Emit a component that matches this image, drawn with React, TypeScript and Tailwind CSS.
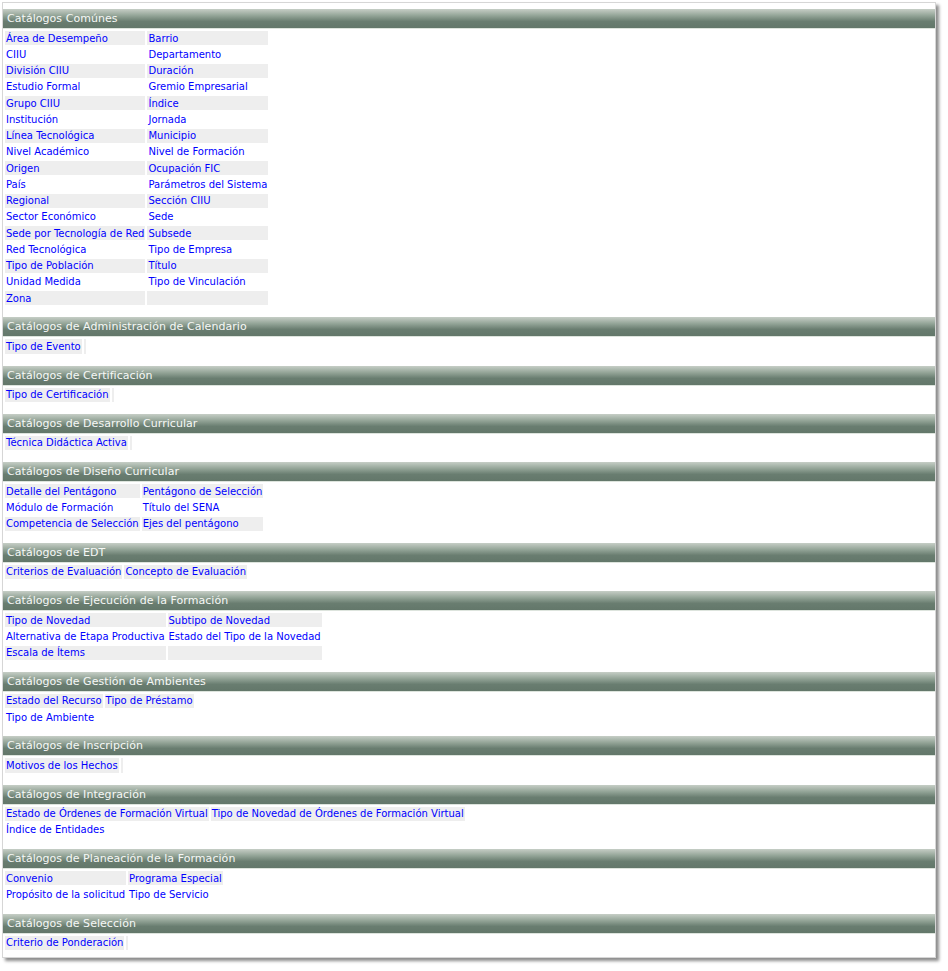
type Section = {
  title: string;
  rows: string[][];
};

const SECTIONS: Section[] = [
  {
    title: "Catálogos Comúnes",
    rows: [
      ["Área de Desempeño", "Barrio"],
      ["CIIU", "Departamento"],
      ["División CIIU", "Duración"],
      ["Estudio Formal", "Gremio Empresarial"],
      ["Grupo CIIU", "Índice"],
      ["Institución", "Jornada"],
      ["Línea Tecnológica", "Municipio"],
      ["Nivel Académico", "Nivel de Formación"],
      ["Origen", "Ocupación FIC"],
      ["País", "Parámetros del Sistema"],
      ["Regional", "Sección CIIU"],
      ["Sector Económico", "Sede"],
      ["Sede por Tecnología de Red", "Subsede"],
      ["Red Tecnológica", "Tipo de Empresa"],
      ["Tipo de Población", "Título"],
      ["Unidad Medida", "Tipo de Vinculación"],
      ["Zona", ""],
    ],
  },
  {
    title: "Catálogos de Administración de Calendario",
    rows: [["Tipo de Evento", ""]],
  },
  {
    title: "Catálogos de Certificación",
    rows: [["Tipo de Certificación", ""]],
  },
  {
    title: "Catálogos de Desarrollo Curricular",
    rows: [["Técnica Didáctica Activa", ""]],
  },
  {
    title: "Catálogos de Diseño Curricular",
    rows: [
      ["Detalle del Pentágono", "Pentágono de Selección"],
      ["Módulo de Formación", "Título del SENA"],
      ["Competencia de Selección", "Ejes del pentágono"],
    ],
  },
  {
    title: "Catálogos de EDT",
    rows: [["Criterios de Evaluación", "Concepto de Evaluación"]],
  },
  {
    title: "Catálogos de Ejecución de la Formación",
    rows: [
      ["Tipo de Novedad", "Subtipo de Novedad"],
      ["Alternativa de Etapa Productiva", "Estado del Tipo de la Novedad"],
      ["Escala de Ítems", ""],
    ],
  },
  {
    title: "Catálogos de Gestión de Ambientes",
    rows: [["Estado del Recurso", "Tipo de Préstamo"], ["Tipo de Ambiente"]],
  },
  {
    title: "Catálogos de Inscripción",
    rows: [["Motivos de los Hechos", ""]],
  },
  {
    title: "Catálogos de Integración",
    rows: [
      [
        "Estado de Órdenes de Formación Virtual",
        "Tipo de Novedad de Órdenes de Formación Virtual",
      ],
      ["Índice de Entidades"],
    ],
  },
  {
    title: "Catálogos de Planeación de la Formación",
    rows: [
      ["Convenio", "Programa Especial"],
      ["Propósito de la solicitud", "Tipo de Servicio"],
    ],
  },
  {
    title: "Catálogos de Selección",
    rows: [["Criterio de Ponderación", ""]],
  },
];

function SectionBlock({ section, last }: { section: Section; last: boolean }) {
  return (
    <div className={last ? "" : "mb-[10px]"}>
      <div className="h-[20px] border-b border-[#dde4dd] bg-[linear-gradient(to_bottom,#c6cec6_0%,#93a497_35%,#697d70_65%,#63776a_100%)] pl-[4px] text-[11px] leading-[19px] tracking-[0.05px] text-[#f6f8f6]">
        {section.title}
      </div>
      <table className="border-separate border-spacing-[2px]">
        <tbody>
          {section.rows.map((row, i) => (
            <tr key={i}>
              {row.map((cell, j) => (
                <td
                  key={j}
                  className={`whitespace-nowrap px-px pt-[1.5px] pb-[0.5px] text-[10px] leading-[12.25px] ${
                    i % 2 === 0 ? "bg-[#eeeeee]" : "bg-white"
                  }`}
                >
                  {cell ? (
                    <a href="#" className="text-[#0000ff] no-underline">
                      {cell}
                    </a>
                  ) : null}
                </td>
              ))}
            </tr>
          ))}
        </tbody>
      </table>
    </div>
  );
}

export default function App() {
  return (
    <div className="min-h-screen bg-white pt-[2px] pl-[2px] font-['DejaVu_Sans',Verdana,sans-serif]">
      <div className="w-[934px] border border-[#d6d6d6] bg-white pt-[6px] pb-[5px] shadow-[3px_3px_3px_rgba(0,0,0,0.45)]">
        {SECTIONS.map((s, i) => (
          <SectionBlock key={s.title} section={s} last={i === SECTIONS.length - 1} />
        ))}
      </div>
    </div>
  );
}
